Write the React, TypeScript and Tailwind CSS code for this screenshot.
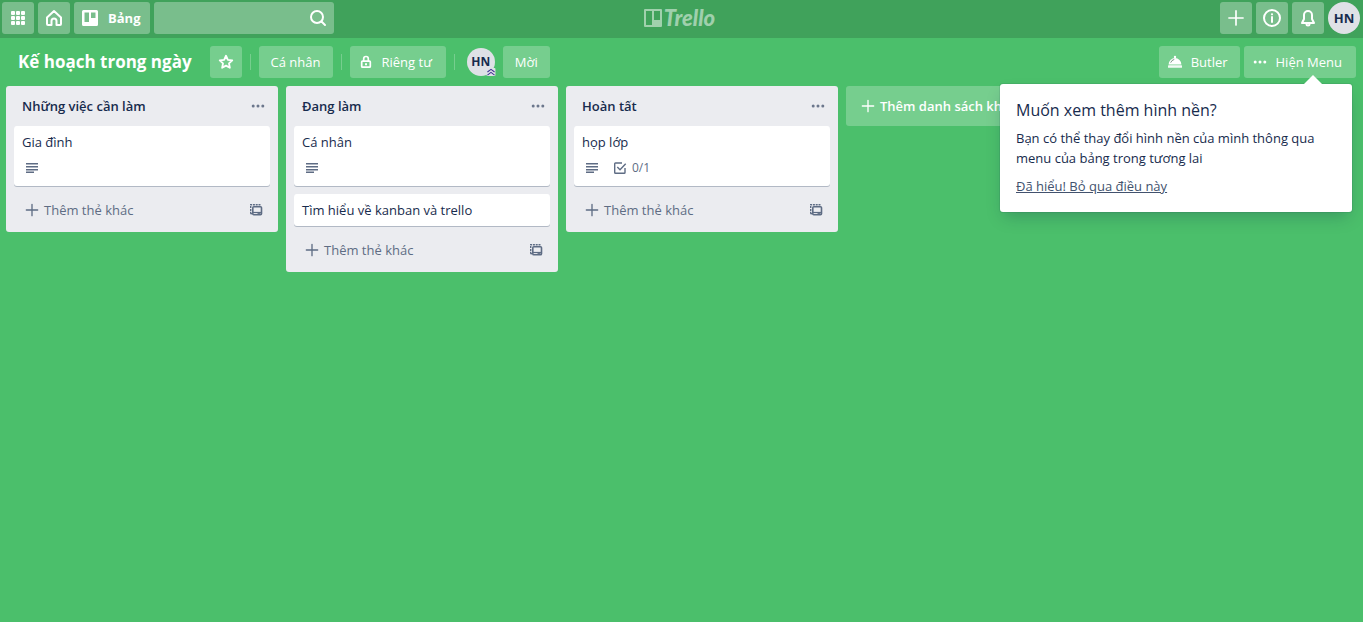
import type { ReactNode } from "react";

type IconProps = { className?: string };

function BoardIcon() {
  return (
    <svg viewBox="0 0 24 24" className="size-6" fill="currentColor" aria-hidden="true">
      <path
        fillRule="evenodd"
        d="M5.500 4h13A1.500 1.500 0 0 1 20 5.500v13a1.500 1.500 0 0 1-1.500 1.500h-13A1.500 1.500 0 0 1 4 18.500v-13A1.500 1.500 0 0 1 5.500 4Zm1 2.500V16H11V6.500H6.500Zm6.500 0V12h4.500V6.500H13Z"
      />
    </svg>
  );
}

function LogoMark() {
  return (
    <svg viewBox="0 0 18 18" className="size-[18px]" fill="currentColor" aria-hidden="true">
      <path
        fillRule="evenodd"
        d="M1 0h16a1 1 0 0 1 1 1v16a1 1 0 0 1-1 1H1a1 1 0 0 1-1-1V1a1 1 0 0 1 1-1Zm1 2v14h6V2H2Zm8 0v9h6V2h-6Z"
      />
    </svg>
  );
}

function AppsIcon() {
  return (
    <svg viewBox="0 0 24 24" className="size-6" fill="currentColor" aria-hidden="true">
      {[5, 10, 15].flatMap((y) =>
        [5, 10, 15].map((x) => <rect key={`${x}-${y}`} x={x} y={y} width="4" height="4" rx="1" />),
      )}
    </svg>
  );
}

function HomeIcon() {
  return (
    <svg viewBox="0 0 24 24" className="size-6" fill="none" stroke="currentColor" strokeWidth="2" strokeLinejoin="round" aria-hidden="true">
      <path d="M12 5 5 11.500V18a1 1 0 0 0 1 1h3.500v-4a2.500 2.500 0 0 1 5 0v4H18a1 1 0 0 0 1-1v-6.500L12 5Z" />
    </svg>
  );
}

function SearchIcon() {
  return (
    <svg viewBox="0 0 24 24" className="size-6" fill="none" stroke="currentColor" strokeWidth="2" strokeLinecap="round" aria-hidden="true">
      <circle cx="11" cy="11" r="6" />
      <path d="m15.500 15.500 3.500 3.500" />
    </svg>
  );
}

function PlusIcon({ className = "size-5" }: IconProps) {
  return (
    <svg viewBox="0 0 24 24" className={className} fill="none" stroke="currentColor" strokeWidth="2" strokeLinecap="round" aria-hidden="true">
      <path d="M12 3.500v17M3.500 12h17" />
    </svg>
  );
}

function InfoIcon() {
  return (
    <svg viewBox="0 0 24 24" className="size-6" fill="none" stroke="currentColor" strokeWidth="2" aria-hidden="true">
      <circle cx="12" cy="12" r="8" />
      <path d="M12 11v5" strokeLinecap="round" />
      <circle cx="12" cy="8.300" r="1.100" fill="currentColor" stroke="none" />
    </svg>
  );
}

function BellIcon() {
  return (
    <svg viewBox="0 0 24 24" className="size-6" fill="none" stroke="currentColor" strokeWidth="2" strokeLinejoin="round" aria-hidden="true">
      <path d="M12 5a4 4 0 0 0-4 4v4l-2 4h12l-2-4V9a4 4 0 0 0-4-4Z" />
      <path d="M10.500 18a1.500 1.500 0 0 0 3 0" />
    </svg>
  );
}

function StarIcon() {
  return (
    <svg viewBox="0 0 24 24" className="size-5" fill="none" stroke="currentColor" strokeWidth="2.200" strokeLinejoin="round" aria-hidden="true">
      <path d="m12 4.500 2.200 4.900 5.300.6-3.900 3.600 1 5.300-4.600-2.600-4.600 2.600 1-5.300L4.500 10l5.300-.6L12 4.500Z" />
    </svg>
  );
}

function LockIcon() {
  return (
    <svg viewBox="0 0 16 16" className="size-4" fill="none" stroke="currentColor" strokeWidth="1.700" aria-hidden="true">
      <rect x="3.700" y="7.200" width="8.600" height="6" rx=".8" />
      <path d="M5.700 7V4.800a2.300 2.300 0 0 1 4.600 0V7" />
      <path d="M7 10.200h2" strokeWidth="2" />
    </svg>
  );
}

function ButlerIcon() {
  return (
    <svg viewBox="0 0 16 16" className="size-4" fill="currentColor" aria-hidden="true">
      <circle cx="8" cy="3" r="1.200" />
      <path d="M1.600 10.500a6.400 6.400 0 0 1 12.800 0H1.600Z" />
      <path d="M3.800 8.300A4.300 4.300 0 0 1 6.900 5.500" fill="none" stroke="#5f7a68" strokeWidth=".8" strokeLinecap="round" />
      <rect x="1" y="11.300" width="14" height="2.500" rx=".5" opacity=".9" />
    </svg>
  );
}

function DotsIcon() {
  return (
    <svg viewBox="0 0 16 16" className="size-4" fill="currentColor" aria-hidden="true">
      <circle cx="3.200" cy="8" r="1.500" />
      <circle cx="8" cy="8" r="1.500" />
      <circle cx="12.800" cy="8" r="1.500" />
    </svg>
  );
}

function DescriptionIcon() {
  return (
    <svg viewBox="0 0 20 20" className="size-5" fill="currentColor" aria-label="Mô tả" role="img">
      <path d="M4 5h12v1.500H4zM4 8h12v1.500H4zM4 11h12v1.500H4zM4 13.500h8V15H4z" />
    </svg>
  );
}

function ChecklistIcon() {
  return (
    <svg viewBox="0 0 20 20" className="size-5" fill="none" stroke="currentColor" strokeWidth="1.400" aria-hidden="true">
      <path d="M12 5H5.500a.8.800 0 0 0-.8.800v8.700c0 .4.400.8.800.8h8.700c.4 0 .8-.4.800-.8V10" />
      <path d="m7.300 9 2.700 2.700 5.700-6" />
    </svg>
  );
}

function TemplateIcon() {
  return (
    <svg viewBox="0 0 16 16" className="size-4" fill="none" stroke="currentColor" aria-hidden="true">
      <path d="M2.700 11.700V2.700h10" strokeWidth="1.400" strokeDasharray="2 .8" />
      <path d="M2.500 11.700h2" strokeWidth="1.400" />
      <rect x="4.800" y="4.800" width="8.700" height="8" rx="1" strokeWidth="1.600" />
      <path d="M5 10.500h8.500" strokeWidth="1.200" />
      <path d="M9.500 11.800h3" strokeWidth="1.400" />
    </svg>
  );
}

function AdminIcon() {
  return (
    <svg viewBox="0 0 10 9" className="absolute -right-px bottom-0 h-2 w-2.5" aria-hidden="true">
      <rect width="10" height="9" rx="1" fill="#dfe1e6" />
      <path d="m1 4.500 4-3 4 3M1 8l4-3 4 3" fill="none" stroke="#403294" strokeWidth="1.200" />
    </svg>
  );
}

function HeaderButton({ label, className = "w-8 justify-center", children }: { label?: string; className?: string; children: ReactNode }) {
  return (
    <button
      type="button"
      aria-label={label}
      className={`flex h-8 shrink-0 items-center rounded-[3px] bg-white/30 text-white ${className}`}
    >
      {children}
    </button>
  );
}

function BoardButton({ label, className = "", children }: { label?: string; className?: string; children: ReactNode }) {
  return (
    <button
      type="button"
      aria-label={label}
      className={`flex h-8 shrink-0 items-center justify-center rounded-[3px] bg-white/24 whitespace-nowrap text-white ${className}`}
    >
      {children}
    </button>
  );
}

function Divider() {
  return <span className="mx-2 h-4 w-px shrink-0 bg-white/24" />;
}

type CardData = { title: string; description?: boolean; checklist?: string };

const lists: { title: string; cards: CardData[] }[] = [
  { title: "Những việc cần làm", cards: [{ title: "Gia đình", description: true }] },
  { title: "Đang làm", cards: [{ title: "Cá nhân", description: true }, { title: "Tìm hiểu về kanban và trello" }] },
  { title: "Hoàn tất", cards: [{ title: "họp lớp", description: true, checklist: "0/1" }] },
];

function Card({ card }: { card: CardData }) {
  return (
    <li className="mb-2 rounded-[3px] bg-white px-2 pt-1.5 pb-0.5 shadow-[0_1px_0_rgba(9,30,66,0.25)]">
      <a href="#card" className="mb-1 block">
        {card.title}
      </a>
      {card.description && (
        <div className="flex gap-2 pt-0.5 pb-1.5 text-xs text-[#5e6c84]">
          <DescriptionIcon />
          {card.checklist && (
            <span className="flex items-center gap-0.5">
              <ChecklistIcon />
              {card.checklist}
            </span>
          )}
        </div>
      )}
    </li>
  );
}

function List({ title, cards }: { title: string; cards: CardData[] }) {
  return (
    <section className="w-[272px] shrink-0 rounded-[3px] bg-[#ebecf0]">
      <header className="flex h-10 items-center justify-between pr-3 pl-4">
        <h2 className="font-semibold">{title}</h2>
        <button type="button" aria-label="Thao tác danh sách" className="text-[#6b778c]">
          <DotsIcon />
        </button>
      </header>
      <ul className="px-2">
        {cards.map((card) => (
          <Card key={card.title} card={card} />
        ))}
      </ul>
      <footer className="flex items-center justify-between px-2 pt-0.5 pb-2 text-[#5e6c84]">
        <button type="button" className="flex h-7 items-center gap-1 pl-2.5">
          <PlusIcon className="size-4" />
          Thêm thẻ khác
        </button>
        <button type="button" aria-label="Tạo từ mẫu" className="px-1.5">
          <TemplateIcon />
        </button>
      </footer>
    </section>
  );
}

export default function App() {
  return (
    <div className="flex min-h-screen flex-col overflow-hidden bg-[#4bbf6b] font-['Open_Sans','Noto_Sans',sans-serif] text-[13px] leading-5 text-[#172b4d]">
      <header className="grid h-[38px] grid-cols-[1fr_auto_1fr] items-start bg-[#40a25b] px-0.5 pt-0.5">
        <nav className="flex gap-1">
          <HeaderButton label="Ứng dụng">
            <AppsIcon />
          </HeaderButton>
          <HeaderButton label="Trang chủ">
            <HomeIcon />
          </HeaderButton>
          <HeaderButton className="gap-1.5 pr-2.5 pl-1 font-bold">
            <BoardIcon />
            Bảng
          </HeaderButton>
          <label className="flex h-8 w-[180px] items-center rounded-[3px] bg-white/30 pr-1 text-white">
            <input type="text" aria-label="Tìm kiếm" className="min-w-0 flex-1 bg-transparent px-2 outline-none" />
            <SearchIcon />
          </label>
        </nav>
        <a href="#home" aria-label="Trello" className="flex h-8 items-center gap-0.5 pr-1 text-white/50">
          <LogoMark />
          <span className="font-['Lato',sans-serif] text-[22px] font-black italic">Trello</span>
        </a>
        <div className="flex justify-end gap-1 pr-px">
          <HeaderButton label="Tạo mới">
            <PlusIcon />
          </HeaderButton>
          <HeaderButton label="Thông tin">
            <InfoIcon />
          </HeaderButton>
          <HeaderButton label="Thông báo">
            <BellIcon />
          </HeaderButton>
          <button type="button" className="size-8 rounded-full bg-[#dfe1e6] font-bold">
            HN
          </button>
        </div>
      </header>

      <div className="relative flex items-center justify-between py-2 pr-[7px] pl-[18px]">
        <div className="flex items-center">
          <h1 className="mr-[18px] text-[17px] leading-8 font-bold whitespace-nowrap text-white">Kế hoạch trong ngày</h1>
          <BoardButton label="Đánh dấu sao" className="w-8">
            <StarIcon />
          </BoardButton>
          <Divider />
          <BoardButton className="px-3">Cá nhân</BoardButton>
          <Divider />
          <BoardButton className="gap-2 pr-3.5 pl-2">
            <LockIcon />
            Riêng tư
          </BoardButton>
          <Divider />
          <button type="button" className="relative mr-2 ml-1 size-7 rounded-full bg-[#dfe1e6] text-xs font-bold">
            HN
            <AdminIcon />
          </button>
          <BoardButton className="px-3">Mời</BoardButton>
        </div>
        <div className="flex gap-1">
          <BoardButton className="gap-2 pr-3 pl-2">
            <ButlerIcon />
            Butler
          </BoardButton>
          <BoardButton className="gap-2 pr-3.5 pl-2">
            <DotsIcon />
            Hiện Menu
          </BoardButton>
        </div>

        <aside className="absolute top-[46px] right-[11px] z-10 w-[352px] rounded-[3px] bg-white p-4 shadow-[0_8px_16px_-4px_rgba(9,30,66,0.25),0_0_0_1px_rgba(9,30,66,0.08)]">
          <svg viewBox="0 0 20 10" className="absolute -top-[9px] right-[29px] h-2.5 w-5" aria-hidden="true">
            <path d="M0 10 10 0l10 10Z" fill="#fff" />
          </svg>
          <h2 className="mb-2 text-base leading-5 font-medium">Muốn xem thêm hình nền?</h2>
          <p className="mb-2">Bạn có thể thay đổi hình nền của mình thông qua menu của bảng trong tương lai</p>
          <a href="#dismiss" className="block text-[#42526e] underline">
            Đã hiểu! Bỏ qua điều này
          </a>
        </aside>
      </div>

      <main className="flex flex-1 items-start gap-2 px-1.5 pb-2">
        {lists.map((list) => (
          <List key={list.title} title={list.title} cards={list.cards} />
        ))}
        <button type="button" className="flex h-10 w-[272px] shrink-0 items-center gap-1 rounded-[3px] bg-white/24 pl-3.5 font-semibold text-white">
          <PlusIcon className="size-4" />
          Thêm danh sách khác
        </button>
      </main>
    </div>
  );
}
